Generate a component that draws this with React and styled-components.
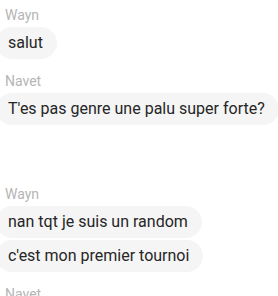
import React from "react";
import styled, { createGlobalStyle } from "styled-components";

const Global = createGlobalStyle`
  html, body { margin: 0; padding: 0; background: #ffffff; }
  body { font-family: Roboto, "Noto Sans", sans-serif; overflow: hidden; }
`;

const Thread = styled.div`
  display: flex;
  flex-direction: column;
  width: 278px;
  padding-top: 7px;
`;

const Group = styled.div`
  display: flex;
  flex-direction: column;
  align-items: flex-start;
  gap: 2px;
  margin-top: ${(p) => (p.$spaced ? "61px" : p.$first ? "0" : "14px")};
`;

const Author = styled.div`
  font-size: 14px;
  line-height: 16px;
  color: #b5b5b5;
  padding-left: 5px;
  margin-bottom: 2px;
`;

const Bubble = styled.div`
  margin-left: -4px;
  padding: 6px 14px 6px 12px;
  font-size: 16px;
  line-height: 20px;
  color: #262626;
  background: #f5f5f5;
  border-radius: 16px;
  white-space: nowrap;
`;

const groups = [
  { author: "Wayn", msgs: ["salut"] },
  { author: "Navet", msgs: ["T'es pas genre une palu super forte?"] },
  { author: "Wayn", msgs: ["nan tqt je suis un random", "c'est mon premier tournoi"], spaced: true },
  { author: "Navet", msgs: ["ouais"] },
];

export default function App() {
  return (
    <>
      <Global />
      <Thread>
        {groups.map((g, i) => (
          <Group key={i} $first={i === 0} $spaced={g.spaced}>
            <Author>{g.author}</Author>
            {g.msgs.map((m, j) => (
              <Bubble key={j}>{m}</Bubble>
            ))}
          </Group>
        ))}
      </Thread>
    </>
  );
}
